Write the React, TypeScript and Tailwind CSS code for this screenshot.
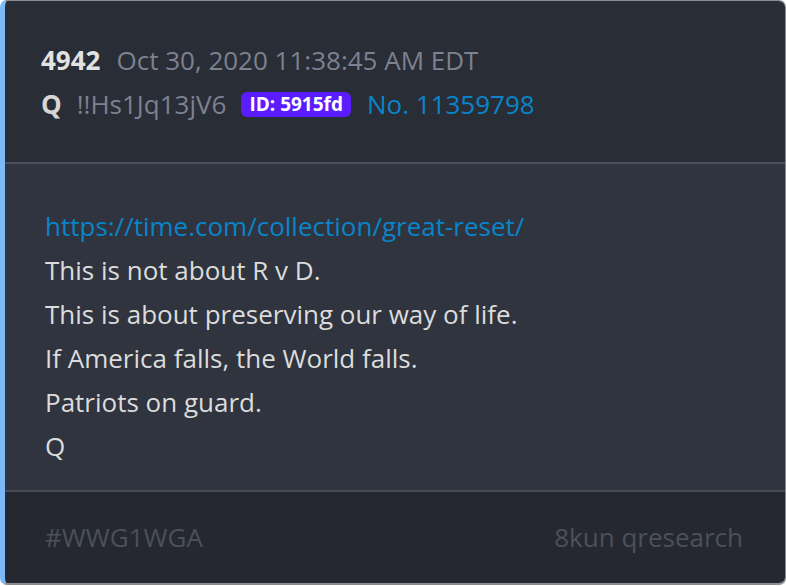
import * as React from "react";

const lines = [
    "This is not about R v D.",
    "This is about preserving our way of life.",
    "If America falls, the World falls.",
    "Patriots on guard.",
    "Q",
];

export default function App() {
    return (
        <div
            className="w-[786px] h-[586px] bg-white"
            style={{ fontFamily: '"Open Sans", "Noto Sans", sans-serif' }}
        >
            <div className="w-[786px] h-[585px] flex flex-col overflow-hidden rounded-[7px] border border-[#8a8d94] border-l-[5px] border-l-[#7cb9f7] border-b-2">
                <div className="h-[161px] bg-[#292d36] pl-[36px] pt-[42px] flex flex-col gap-[10px]">
                    <div className="flex items-baseline gap-[16px] text-[26px] leading-[34px]">
                        <span className="font-bold text-[#e2e2e2]">4942</span>
                        <span className="text-[#7d8190]">Oct 30, 2020 11:38:45 AM EDT</span>
                    </div>
                    <div className="flex items-center text-[26px] leading-[34px]">
                        <span className="font-bold text-[#d6d6d6] mr-[15px]">Q</span>
                        <span className="text-[#7d8190] mr-[15px]">!!Hs1Jq13jV6</span>
                        <span className="bg-[#5b1dff] text-white font-bold text-[19px] leading-[25px] px-[8px] rounded-[6px] mr-[16px]">
                            ID: 5915fd
                        </span>
                        <span className="text-[#0a84c9]">No. 11359798</span>
                    </div>
                </div>
                <div className="h-[2px] bg-[#4a4f59]" />
                <div className="h-[326px] bg-[#2f343e] pl-[40px] pt-[40px]">
                    <a className="block text-[26px] leading-[44px] text-[#0a84c9]">
                        https://time.com/collection/great-reset/
                    </a>
                    {lines.map((l) => (
                        <p key={l} className="text-[26px] leading-[44px] text-[#dcdcdc]">
                            {l}
                        </p>
                    ))}
                </div>
                <div className="h-[2px] bg-[#474b55]" />
                <div className="flex-1 bg-[#252830] pl-[40px] pr-[42px] flex items-center justify-between text-[26px] text-[#4c505a]">
                    <span>#WWG1WGA</span>
                    <span>8kun qresearch</span>
                </div>
            </div>
        </div>
    );
}
